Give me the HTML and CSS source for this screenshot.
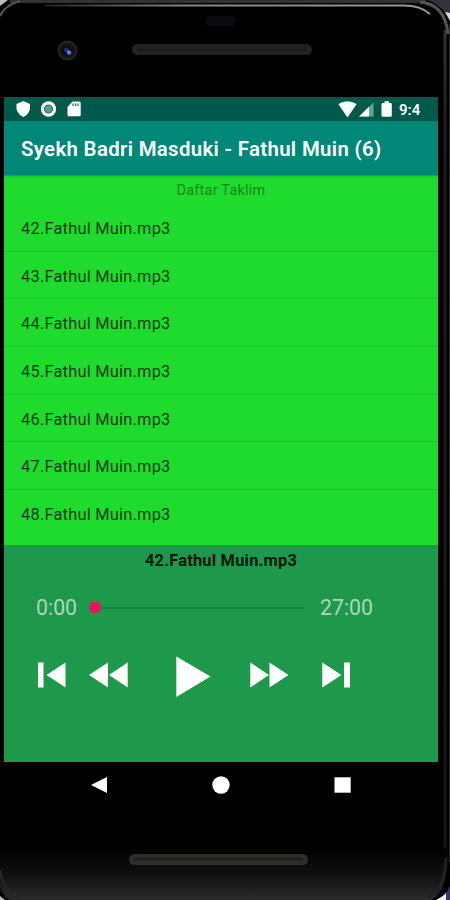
FILE: index.html
```html
<!DOCTYPE html>
<html lang="id">
<head>
<meta charset="utf-8">
<title>Syekh Badri Masduki</title>
<link rel="stylesheet" href="styles.css">
</head>
<body>
<div class="phone">
  <svg class="shell" width="450" height="900" viewBox="0 0 450 900" aria-hidden="true">
    <defs>
      <linearGradient id="foot" x1="0" y1="0" x2="0" y2="1"><stop offset="0" stop-color="#000"/><stop offset=".5" stop-color="#101010"/><stop offset="1" stop-color="#2b2b2b"/></linearGradient>
      <linearGradient id="rim" x1="0" y1="0" x2="1" y2="0"><stop offset="0" stop-color="#222"/><stop offset=".35" stop-color="#858585"/><stop offset="1" stop-color="#999"/></linearGradient>
      <linearGradient id="side" gradientUnits="userSpaceOnUse" x1="0" y1="30" x2="0" y2="858"><stop offset="0" stop-color="#333"/><stop offset=".12" stop-color="#1d1d1d"/><stop offset="1" stop-color="#161616"/></linearGradient>
    </defs>
    <path d="M0 0H8L0 6Z" fill="#bbb"/>
    <path d="M428 0H450V18L442 9Z" fill="#34323e"/>
    <path d="M450 13V21L445 12Z" fill="#ddd"/>
    <path d="M0 20Q4 1 24 0H426Q444 4 450 27V884Q444 895 433 900H10Q3 897 0 892Z" fill="#000"/>
    <path d="M10 1.5H426" stroke="#303236" stroke-width="3"/>
    <path d="M0 16Q5 5 20 1" fill="none" stroke="#555" stroke-width="2"/>
    <path d="M45 5.5H402Q420 5 430 14" fill="none" stroke="url(#rim)" stroke-width="2"/>
    <path d="M420 2Q445 4 448 34" fill="none" stroke="#555" stroke-width="3"/>
    <path d="M445 30V858" fill="none" stroke="url(#side)" stroke-width="3"/>
    <path d="M449.500 24V862" stroke="#292929"/>
    <path d="M0 848H446V872Q444 894 431 900H10Q3 896 0 888Z" fill="url(#foot)"/>
    <path d="M0 870Q3 892 20 897" fill="none" stroke="#262626" stroke-width="3"/>
    <path d="M446 858Q446 888 428 897" fill="none" stroke="#222" stroke-width="3"/>
    <path d="M0 896L5 900H0Z" fill="#bbb"/>
    <path d="M450 886V900H435Q446 896 450 886Z" fill="#37316c"/>
    <path d="M436 900Q444 896 446 893V900Z" fill="#eee"/>
    <rect x="205" y="16" width="31" height="10" rx="5" fill="#0a0c11"/>
    <circle cx="67.500" cy="50.500" r="9" fill="#151517" stroke="#242426" stroke-width="2"/>
    <circle cx="67" cy="50.500" r="5" fill="#090a13"/>
    <circle cx="66.500" cy="50" r="2.500" fill="#252c70"/>
    <circle cx="69" cy="52.500" r="2.300" fill="#6474dc"/>
    <rect x="132" y="44" width="180" height="11" rx="5.500" fill="#24221f"/>
    <path d="M137 49.500H307" stroke="#1c1a18" stroke-width="2"/>
    <rect x="129" y="854" width="179" height="11" rx="5.500" fill="#302e2b"/>
    <path d="M134 859H303" stroke="#1f1e1b" stroke-width="3"/>
  </svg>
  <main class="screen">
    <div class="status">
      <svg class="status-left" width="66" height="18" viewBox="0 0 66 18" fill="#fff">
        <path d="M7.300 1L14 4V9Q13 14 7.300 17Q1.500 14 .5 9V4Z"/>
        <circle cx="32.500" cy="9" r="7.700"/><circle cx="32.500" cy="9" r="4" fill="#5b9b8a" stroke="#247663" stroke-width="1.200"/>
        <path d="M56.500 1.500H63Q64.700 1.500 64.700 3V14.700Q64.700 16.200 63 16.200H53Q51.500 16.200 51.500 14.700V7Z"/><path d="M57 3.500V6M59.500 3.500V6M62 3.500V6" stroke="#247663" stroke-width="1.300"/>
      </svg>
      <svg class="status-right" width="54" height="18" viewBox="0 0 54 18" fill="#fff">
        <path d="M.3 4Q9.500-1.500 18.700 4L9.500 17.500Z"/>
        <path d="M35.500 2.500V16.500H21Z" fill="#65a293"/><path d="M31 6.800V16.500H21Z"/>
        <path d="M46.500 1.300H51V3H52.500Q53.800 3 53.800 4.300V15.500Q53.800 16.800 52.500 16.800H45Q43.500 16.800 43.500 15.500V4.300Q43.500 3 45 3H46.500Z"/>
      </svg>
      <span class="clock">9:4</span>
    </div>
    <header class="appbar"><h1>Syekh Badri Masduki - Fathul Muin (6)</h1></header>
    <section class="list">
      <h2>Daftar Taklim</h2>
      <ul>
        <li>42.Fathul Muin.mp3</li>
        <li>43.Fathul Muin.mp3</li>
        <li>44.Fathul Muin.mp3</li>
        <li>45.Fathul Muin.mp3</li>
        <li>46.Fathul Muin.mp3</li>
        <li>47.Fathul Muin.mp3</li>
        <li>48.Fathul Muin.mp3</li>
      </ul>
    </section>
    <section class="player">
      <div class="now">42.Fathul Muin.mp3</div>
      <div class="progress">
        <span class="time">0:00</span>
        <div class="track"><span class="thumb"></span><span class="line"></span></div>
        <span class="time">27:00</span>
      </div>
      <div class="controls">
        <svg width="28" height="42" viewBox="0 0 28 42"><path d="M0 8.500H5.500V33.500H0ZM27.500 8.500V33.500L8.500 21Z"/></svg>
        <svg width="39" height="42" viewBox="0 0 39 42"><path d="M19 8.500V33.500L0 21ZM38.700 8.500V33.500L20 21Z"/></svg>
        <svg width="35" height="42" viewBox="0 0 35 42"><path d="M.3 2.500L34.500 22.500L.3 43Z"/></svg>
        <svg width="39" height="42" viewBox="0 0 39 42"><path d="M.3 8.500L19 21L.3 33.500ZM19.500 8.500L38.500 21L19.500 33.500Z"/></svg>
        <svg width="28" height="42" viewBox="0 0 28 42"><path d="M.3 8.500L19.500 21L.3 33.500ZM22 8.500H28V33.500H22Z"/></svg>
      </div>
    </section>
  </main>
  <nav class="nav">
    <svg width="17" height="18" viewBox="0 0 17 18"><path d="M16 1V17L0 9Z"/></svg>
    <svg width="18" height="18" viewBox="0 0 18 18"><circle cx="9" cy="9" r="8.700"/></svg>
    <svg width="17" height="18" viewBox="0 0 17 18"><path d="M.5 1.300H16.700V16.700H.5Z"/></svg>
  </nav>
</div>
</body>
</html>
```
FILE: styles.css
```css
* { box-sizing: border-box; }
body { margin: 0; background: #000; font-family: Roboto, sans-serif; }
h1, h2, ul { margin: 0; padding: 0; }
svg { display: block; flex: none; overflow: visible; }
.phone { position: relative; width: 450px; height: 900px; padding: 97px 12px 0 4px; overflow: hidden; }
.shell { position: absolute; inset: 0; }
.screen { position: relative; height: 664.500px; display: flex; flex-direction: column; }
.status { height: 24px; flex: none; display: flex; align-items: center; padding: 0 17px 0 12px; background: #00594a; color: #fff; }
.status-right { margin-left: auto; }
.clock { width: 22px; margin-left: 7px; padding-top: 1px; font-size: 15px; font-weight: 600; white-space: nowrap; }
.appbar { height: 54px; flex: none; display: flex; align-items: center; padding: 1px 0 0 17px; background: #008777; color: #fff; }
h1 { font-size: 20.400px; font-weight: 600; line-height: 24px; letter-spacing: .33px; white-space: nowrap; }
.list { height: 370px; flex: none; background: #1edb2e; overflow: hidden; box-shadow: inset 0 2px 2px -1px #119f3c; }
h2 { height: 29px; padding-top: 6px; text-align: center; font-size: 14.500px; font-weight: 400; line-height: 20px; letter-spacing: .22px; color: #12861d; }
ul { list-style: none; }
li { height: 47.700px; display: flex; align-items: center; padding: 2px 0 0 17px; border-bottom: 1px solid #1bc52a; color: #053b0b; font-size: 16.400px; letter-spacing: .23px; }
li:last-child { border-bottom: 0; }
.player { flex: 1; background: #1e994b; }
.now { height: 30px; padding-top: 1px; text-align: center; font-size: 16.400px; font-weight: 700; line-height: 29px; letter-spacing: .23px; color: #02160a; }
.progress { height: 65px; display: flex; align-items: center; padding: 0 65px 0 32px; color: #acd5bb; }
.time { font-size: 21.300px; line-height: 24px; }
.track { flex: 1; display: flex; align-items: center; margin: 0 16px 0 12px; }
.thumb { width: 12px; height: 11px; border-radius: 5px; background: #e31666; }
.line { flex: 1; height: 2px; background: #188443; }
.controls { height: 42px; margin-top: 14px; display: grid; grid-template-columns: 51px 87px 73.500px 72px 28px; padding-left: 34px; fill: #fff; }
.nav { position: relative; height: 47px; display: flex; justify-content: space-between; align-items: center; padding: 0 87px; fill: #fff; }
```
